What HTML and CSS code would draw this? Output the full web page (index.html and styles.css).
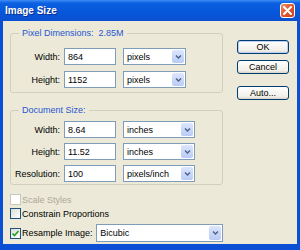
FILE: index.html
```html
<!DOCTYPE html>
<html lang="en">
<head>
    <meta charset="UTF-8">
    <title>Image Size</title>
    <link rel="stylesheet" href="styles.css">
</head>
<body>
    <div class="window">
        <div class="titlebar">
            <span class="title">Image Size</span>
            <button type="button" class="close-btn">
                <svg width="9" height="9" viewBox="0 0 9 9"><path d="M1 1 L8 8 M8 1 L1 8" stroke="#fff" stroke-width="2" stroke-linecap="round"/></svg>
            </button>
        </div>
        <div class="dialog">
            <div class="main">
                <fieldset class="group">
                    <legend>Pixel Dimensions:&nbsp; 2.85M</legend>
                    <div class="field-grid">
                        <label for="px-width">Width:</label>
                        <input type="text" id="px-width" value="864">
                        <div class="combo combo-short"><span>pixels</span><i class="arrow"><svg width="7" height="4" viewBox="0 0 7 4"><path d="M1 .5 L3.5 3 L6 .5" stroke="#4d6185" stroke-width="1.4" fill="none"/></svg></i></div>

                        <label for="px-height">Height:</label>
                        <input type="text" id="px-height" value="1152">
                        <div class="combo combo-short"><span>pixels</span><i class="arrow"><svg width="7" height="4" viewBox="0 0 7 4"><path d="M1 .5 L3.5 3 L6 .5" stroke="#4d6185" stroke-width="1.4" fill="none"/></svg></i></div>
                    </div>
                </fieldset>

                <fieldset class="group group-doc">
                    <legend>Document Size:</legend>
                    <div class="field-grid doc-grid">
                        <label for="doc-width">Width:</label>
                        <input type="text" id="doc-width" value="8.64">
                        <div class="combo"><span>inches</span><i class="arrow"><svg width="7" height="4" viewBox="0 0 7 4"><path d="M1 .5 L3.5 3 L6 .5" stroke="#4d6185" stroke-width="1.4" fill="none"/></svg></i></div>

                        <label for="doc-height">Height:</label>
                        <input type="text" id="doc-height" value="11.52">
                        <div class="combo"><span>inches</span><i class="arrow"><svg width="7" height="4" viewBox="0 0 7 4"><path d="M1 .5 L3.5 3 L6 .5" stroke="#4d6185" stroke-width="1.4" fill="none"/></svg></i></div>

                        <label for="resolution">Resolution:</label>
                        <input type="text" id="resolution" value="100">
                        <div class="combo"><span>pixels/inch</span><i class="arrow"><svg width="7" height="4" viewBox="0 0 7 4"><path d="M1 .5 L3.5 3 L6 .5" stroke="#4d6185" stroke-width="1.4" fill="none"/></svg></i></div>
                    </div>
                </fieldset>

                <div class="options">
                    <div class="check disabled"><span class="box"></span>Scale Styles</div>
                    <div class="check"><span class="box"></span>Constrain Proportions</div>
                    <div class="resample-row">
                        <div class="check resample"><span class="box"><svg width="9" height="9" viewBox="0 0 9 9"><path d="M1.5 4.5 L3.5 6.5 L7.5 2" stroke="#21a121" stroke-width="1.6" fill="none"/></svg></span>Resample Image:</div>
                        <div class="combo combo-wide"><span>Bicubic</span><i class="arrow"><svg width="7" height="4" viewBox="0 0 7 4"><path d="M1 .5 L3.5 3 L6 .5" stroke="#4d6185" stroke-width="1.4" fill="none"/></svg></i></div>
                    </div>
                </div>
            </div>

            <div class="buttons">
                <button type="button" class="btn btn-default">OK</button>
                <button type="button" class="btn">Cancel</button>
                <button type="button" class="btn btn-auto">Auto...</button>
            </div>
        </div>
    </div>
</body>
</html>
```

FILE: styles.css
```css
body {
    margin: 0;
    padding: 0;
    font-family: "Liberation Sans", Arial, sans-serif;
    font-size: 9px;
    color: #000;
}

.window {
    width: 300px;
    height: 250px;
    display: flex;
    flex-direction: column;
    background: #0b4fd4;
    box-sizing: border-box;
}

.titlebar {
    height: 21px;
    flex: none;
    display: flex;
    align-items: center;
    justify-content: space-between;
    padding: 0 5px 0 5px;
    background: linear-gradient(#3d8ef5 0, #0c60e2 3px, #0757db 55%, #0a50d0 100%);
}

.title {
    color: white;
    font-weight: bold;
    font-size: 10px;
    text-shadow: 1px 1px 0 #0a2f8c;
}

.close-btn {
    width: 15px;
    height: 15px;
    padding: 0;
    border: 1px solid #fff;
    border-radius: 3px;
    background: linear-gradient(135deg, #f0926c, #e0562c 50%, #c9401c);
    display: flex;
    align-items: center;
    justify-content: center;
}

.dialog {
    flex: 1;
    margin: 0 3px 6px;
    background: #ece9d8;
    display: flex;
    gap: 14px;
    padding: 7px 0 0 7px;
}

.main {
    width: 213px;
    display: flex;
    flex-direction: column;
}

.group {
    margin: 0;
    padding: 9px 0 4px 0;
    border: 1px solid #d0d0bf;
    border-radius: 3px;
    min-width: 0;
}

.group legend {
    margin-left: 8px;
    padding: 0 3px;
    line-height: 11px;
    color: #2656d4;
}

.group-doc {
    margin-top: 12px;
    padding: 5px 0 2px 0;
}

.field-grid {
    display: grid;
    grid-template-columns: 49px 52px auto;
    grid-auto-rows: 17px;
    column-gap: 4px;
    row-gap: 6px;
    align-items: center;
}

.doc-grid {
    row-gap: 5px;
}

.field-grid label {
    text-align: right;
}

.field-grid input {
    height: 17px;
    width: 52px;
    box-sizing: border-box;
    border: 1px solid #7f9db9;
    padding: 0 3px;
    font-family: inherit;
    font-size: 9px;
    background: white;
}

.combo {
    height: 17px;
    width: 72px;
    margin-left: 3px;
    box-sizing: border-box;
    border: 1px solid #7f9db9;
    background: white;
    display: flex;
    align-items: stretch;
}

.combo span {
    flex: 1;
    padding-left: 3px;
    display: flex;
    align-items: center;
    overflow: hidden;
    white-space: nowrap;
}

.combo .arrow {
    width: 12px;
    margin: 1px;
    border-radius: 2px;
    background: linear-gradient(#dce6fd, #b9cbf6);
    display: flex;
    align-items: center;
    justify-content: center;
}

.combo-short {
    width: 63px;
}

.combo-wide {
    width: 128px;
    height: 18px;
    margin-left: 0;
}

.options {
    margin-top: 8px;
    display: flex;
    flex-direction: column;
    gap: 1px;
}

.check {
    height: 13px;
    display: flex;
    align-items: center;
    gap: 1px;
}

.check .box {
    width: 11px;
    height: 11px;
    box-sizing: border-box;
    border: 1px solid #1c5180;
    background: linear-gradient(135deg, #dcdcd5, #fff);
    display: flex;
    align-items: center;
    justify-content: center;
}

.check.disabled {
    color: #aca899;
}

.check.disabled .box {
    border-color: #cac8bb;
    background: #fff;
}

.resample-row {
    margin-top: 3px;
    display: flex;
    align-items: center;
}

.check.resample {
    width: 87px;
}

.buttons {
    margin-top: 12px;
    display: flex;
    flex-direction: column;
    gap: 6px;
}

.btn {
    width: 52px;
    height: 14px;
    padding: 0;
    border: 1px solid #003c74;
    border-radius: 3px;
    background: linear-gradient(#fff, #f1efe8 80%, #d8d2c6);
    font-family: inherit;
    font-size: 9px;
    color: #000;
}

.btn-default {
    box-shadow: inset 0 0 0 1px #bcd0f4;
}

.btn-auto {
    margin-top: 6px;
}
```
